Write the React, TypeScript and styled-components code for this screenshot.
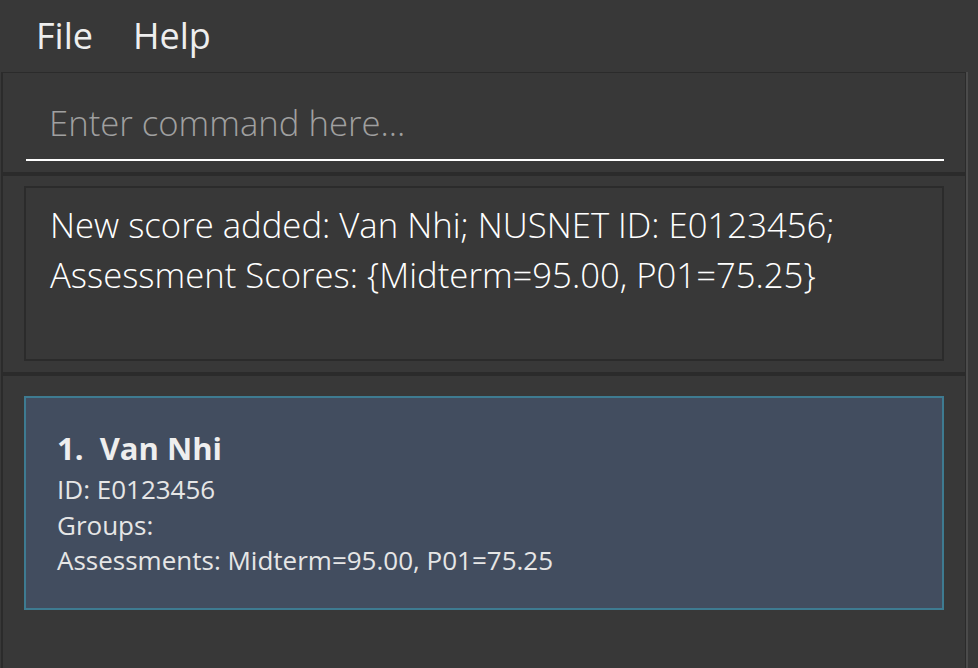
import React from "react";
import styled, { createGlobalStyle } from "styled-components";

const Global = createGlobalStyle`
  html, body { margin: 0; padding: 0; background: #383838; }
  body { font-family: "Open Sans", "Noto Sans", sans-serif; }
  * { box-sizing: border-box; }
`;

const Window = styled.div`
  width: 978px;
  height: 668px;
  background: #383838;
  display: flex;
  flex-direction: column;
  overflow: hidden;
`;

const MenuBar = styled.div`
  height: 72px;
  display: flex;
  align-items: center;
  padding-left: 16px;
  flex-shrink: 0;
`;

const MenuItem = styled.div`
  font-family: "Open Sans", sans-serif;
  font-weight: 400;
  font-size: 36px;
  color: #eeeeee;
  padding: 0 20px;
  line-height: 72px;
`;

const Body = styled.div`
  flex: 1;
  display: flex;
  min-height: 0;
`;

const Shell = styled.div`
  width: 968px;
  padding-left: 1px;
  border-right: 2px solid #4b4b4b;
  display: flex;
`;

const Column = styled.div`
  flex: 1;
  border-left: 2px solid #2b2b2b;
  border-right: 1px solid #2b2b2b;
  border-top: 1px solid #2b2b2b;
  display: flex;
  flex-direction: column;
`;

const CommandPanel = styled.div`
  height: 103px;
  border-bottom: 4px solid #2b2b2b;
  padding: 0 21px 11px 23px;
  display: flex;
  align-items: flex-end;
`;

const CommandInput = styled.div`
  width: 100%;
  height: 86px;
  border-bottom: 2px solid #ffffff;
  display: flex;
  align-items: center;
  padding-left: 23px;
  padding-top: 10px;
  font-family: "Open Sans", sans-serif;
  font-weight: 300;
  font-size: 34.7px;
  color: #a0a0a0;
`;

const ResultPanel = styled.div`
  height: 200px;
  border-bottom: 4px solid #2b2b2b;
  padding: 10px 21px 11px 21px;
  display: flex;
`;

const ResultBox = styled.div`
  flex: 1;
  border: 2px solid #2b2b2b;
  padding: 12px 24px;
  font-family: "Open Sans", sans-serif;
  font-weight: 300;
  font-size: 34.7px;
  line-height: 50px;
  color: #ffffff;
`;

const ListPanel = styled.div`
  flex: 1;
  padding: 20px 21px 0 21px;
`;

const Card = styled.div`
  height: 214px;
  background: #424d5f;
  border: 2px solid #3e7b91;
  padding: 28px 31px;
  display: flex;
  flex-direction: column;
  font-family: "Open Sans", sans-serif;
  color: #e6e6e6;
`;

const NameRow = styled.div`
  font-weight: 700;
  font-size: 31px;
  line-height: 44px;
  color: #eeeeee;
  white-space: pre;
  margin-bottom: 2px;
`;

const InfoLine = styled.div`
  font-weight: 400;
  font-size: 26px;
  line-height: 35.5px;
`;

export default function App() {
  return (
    <Window>
      <Global />
      <MenuBar>
        <MenuItem>File</MenuItem>
        <MenuItem>Help</MenuItem>
      </MenuBar>
      <Body>
        <Shell>
          <Column>
            <CommandPanel>
              <CommandInput>Enter command here...</CommandInput>
            </CommandPanel>
            <ResultPanel>
              <ResultBox>
                New score added: Van Nhi; NUSNET ID: E0123456;
                <br />
                Assessment Scores: {"{"}Midterm=95.00, P01=75.25{"}"}
              </ResultBox>
            </ResultPanel>
            <ListPanel>
              <Card>
                <NameRow>{"1.  Van Nhi"}</NameRow>
                <InfoLine>ID: E0123456</InfoLine>
                <InfoLine>Groups:</InfoLine>
                <InfoLine>Assessments: Midterm=95.00, P01=75.25</InfoLine>
              </Card>
            </ListPanel>
          </Column>
        </Shell>
      </Body>
    </Window>
  );
}
